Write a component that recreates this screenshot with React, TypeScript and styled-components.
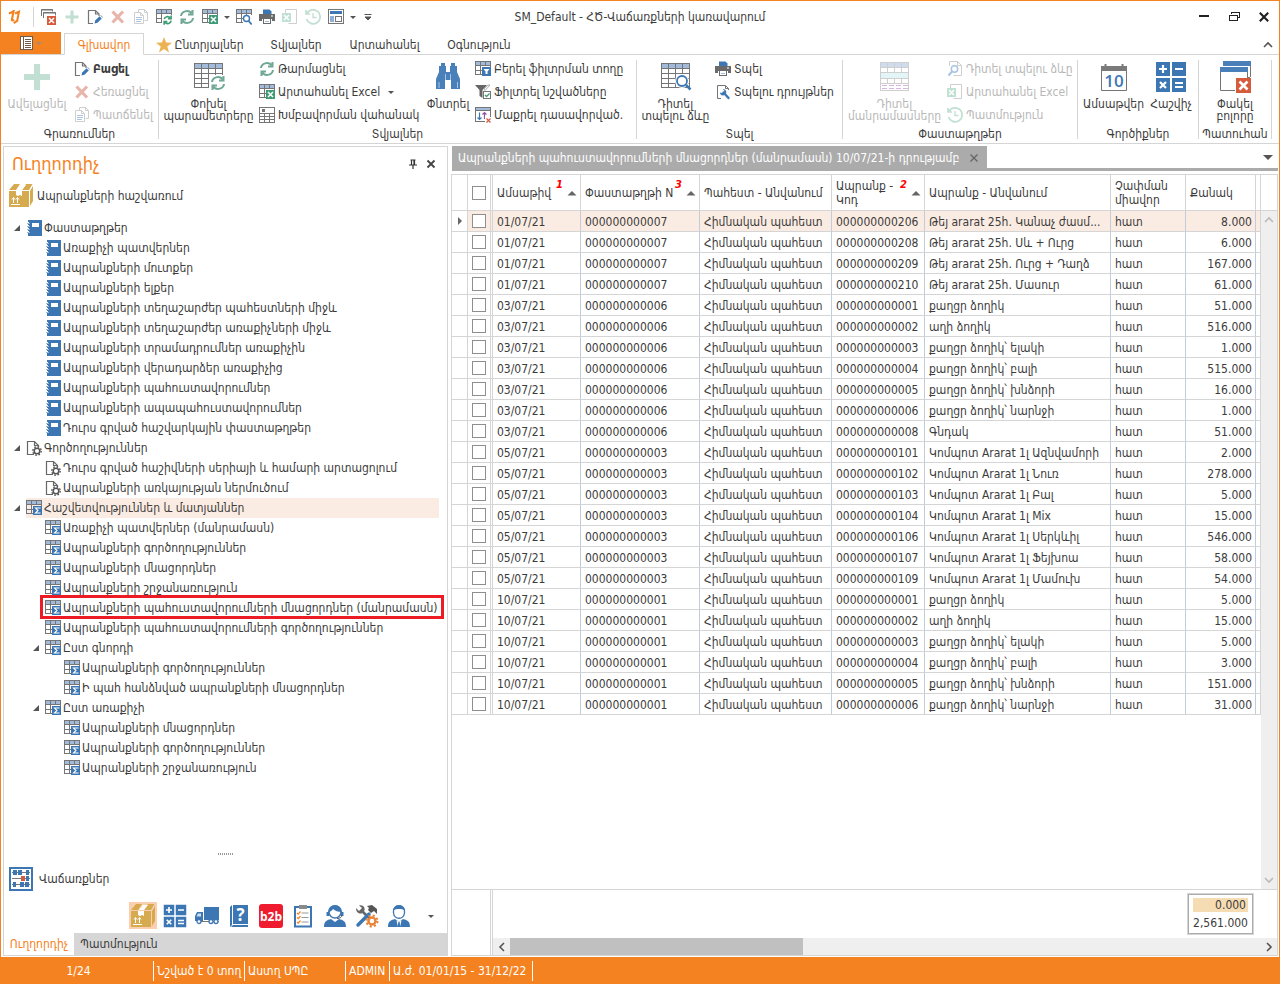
import React from 'react';
import styled, { createGlobalStyle, css } from 'styled-components';

const c = {
  orange: '#f58220',
  text: '#3c3c3c',
  muted: '#b8b8b8',
  line: '#d5d5d5',
  blue: '#3d77b3',
  lightBlue: '#a3bbdb',
  gray: '#757575',
  green: '#6fa895',
  red: '#d65a3c',
  select: '#fbece3',
};

const Global = createGlobalStyle`
  *, *::before, *::after { box-sizing: border-box; }
  body { margin: 0; background: #fff; }
  body, button, input, table {
    font-family: "DejaVu Sans Condensed", "DejaVu Sans", "Noto Sans", sans-serif;
    font-size: 12px;
    line-height: 14px;
    color: ${c.text};
  }
  button { border: 0; padding: 0; background: none; white-space: nowrap; }
  svg { display: block; flex: none; }
`;

/* ---------- icons ---------- */

type IconProps = { s?: number; v?: number; crisp?: boolean; children: React.ReactNode };
const Svg = ({ s = 16, v = 16, crisp, children }: IconProps) => (
  <svg width={s} height={s} viewBox={`0 0 ${v} ${v}`} fill="none" shapeRendering={crisp ? 'crispEdges' : undefined} aria-hidden="true">
    {children}
  </svg>
);

const TableBase = () => (
  <g shapeRendering="crispEdges">
    <rect x="0.5" y="0.5" width="15" height="4" fill={c.lightBlue} stroke={c.gray} />
    <path d="M5.5 0v14M10.5 0v5M.5 4v10M0 9.5h7M0 13.5h7M15.5 4v2" stroke={c.gray} />
  </g>
);
const Arrows = ({ color = c.green }: { color?: string }) => (
  <path d="M2 7a6 5.5 0 0 1 10.500-3M14 9a6 5.500 0 0 1-10.500 3M13.500 1v4.500H9M2.500 15v-4.500H7" stroke={color} strokeWidth="2" />
);
const ExcelBox = ({ x = 7, y = 6, size = 9 }) => (
  <g>
    <rect x={x} y={y} width={size} height={size} fill="#3d9c76" />
    <path d={`M${x + 2} ${y + 2}l${size - 4} ${size - 4}m0-${size - 4}l-${size - 4} ${size - 4}`} stroke="#fff" strokeWidth="1.500" />
  </g>
);
const PageShape = ({ stroke = c.gray }: { stroke?: string }) => (
  <path d="M8 14.500H1.500v-13H8.500L12.500 5.500V7M8.500 1.500v4h4" stroke={stroke} strokeWidth="1.200" />
);
const Cross = ({ color = '#e8b5aa' }: { color?: string }) => (
  <Svg><path d="M2.500 2.500l10.500 11M13 2.500L2.500 13.500" stroke={color} strokeWidth="3.200" /></Svg>
);
const Plus = ({ s = 16 }: { s?: number }) => (
  <Svg s={s} crisp={s > 20}><path d="M8 1.500v13M1.500 8h13" stroke="#c1dfd3" strokeWidth="3.200" /></Svg>
);
const EditPage = () => (
  <Svg>
    <path d="M6 14.500H1.500v-13H8.500L12 5v2M8.500 1.500V5H12" stroke={c.gray} strokeWidth="1.200" />
    <path d="M7.500 14.500l.7-3 4.300-4.300 2.300 2.300-4.300 4.300z" fill={c.blue} />
    <path d="M13.200 6.500l2.300 2.300.500-.600-2.300-2.300z" fill="#6b93c2" />
  </Svg>
);
const CopyPages = () => (
  <Svg>
    <path d="M5.500 3.500v-3h6l3 3v8h-3M11.500.500v3h3" stroke="#cfcfcf" />
    <path d="M1.500 3.500h6l3 3v8h-9zM7.500 3.500v3h3" fill="#fff" stroke="#cfcfcf" />
    <path d="M3 8.500h6M3 10.500h6M3 12.500h5" stroke="#a9c5e3" />
  </Svg>
);
const TableRefresh = () => (
  <Svg><TableBase /><rect x="6" y="6" width="10" height="10" fill="#fff" /><g transform="translate(7 6.500) scale(.58)"><path d="M2 6a6 5.500 0 0 1 10.500-2M14 9a6 5.500 0 0 1-10.500 3M14 0v5.500H8.500M2 16v-5.500H7.500" stroke="#3d9c76" strokeWidth="2.800" /></g></Svg>
);
const Refresh = () => <Svg><Arrows /></Svg>;
const TableExcel = () => <Svg><TableBase /><ExcelBox /></Svg>;
const TableSearch = () => (
  <Svg>
    <TableBase /><path d="M5.500 4v10M10.500 4v3" stroke={c.gray} />
    <circle cx="10.500" cy="9.500" r="3" fill="#fff" stroke={c.blue} strokeWidth="1.400" /><path d="M12.700 12l3 3.500" stroke={c.blue} strokeWidth="1.800" />
  </Svg>
);
const Printer = () => (
  <Svg>
    <path d="M4 5V.500h6.500L12.500 2.500V5z" fill={c.blue} />
    <path d="M0 5h16v7h-3v-2H3v2H0z" fill="#6a6a6a" /><path d="M12 7h2" stroke="#fff" />
    <rect x="4.500" y="9.500" width="7" height="5" fill="#fff" stroke="#6a6a6a" /><path d="M6 12.500h4" stroke={c.lightBlue} />
  </Svg>
);
const PageExcelFaded = () => (
  <Svg>
    <path d="M3.500 4v-3.500h11v14h-8" stroke="#cfcfcf" />
    <rect x="0" y="4" width="9" height="9" fill="#bfe0d2" /><path d="M2 6l5 5m0-5l-5 5" stroke="#fff" strokeWidth="1.500" />
  </Svg>
);
const HistoryFaded = () => (
  <Svg>
    <path d="M2 4.500A7 7 0 1 1 1.500 10M1 1v4h4" stroke="#c1dfd3" strokeWidth="1.700" /><path d="M8 4v4.500h3.500" stroke="#c1dfd3" strokeWidth="1.300" />
  </Svg>
);
const LayoutIcon = () => (
  <Svg crisp>
    <rect x="0.500" y="0.500" width="15" height="14" stroke={c.gray} /><path d="M2 3.500h12" stroke={c.blue} strokeWidth="3" />
    <rect x="2" y="7" width="4" height="6" fill="#8db0da" /><rect x="7.500" y="7.500" width="6" height="5" stroke={c.gray} />
  </Svg>
);
const CloseWindows = () => (
  <Svg>
    <path d="M.5 7V.500h11v2M2.500 9V3.500h12v3" stroke={c.gray} /><path d="M0 1h12M2 4h13" stroke={c.gray} />
    <rect x="6" y="7" width="9" height="9" fill={c.red} /><path d="M8 9l5 5m0-5l-5 5" stroke="#fff" strokeWidth="1.500" />
  </Svg>
);
const CaretDown = ({ color = '#555' }: { color?: string }) => (
  <Svg s={8} v={8}><path d="M1 3h6L4 6z" fill={color} /></Svg>
);
const MoreCaret = () => (
  <Svg s={8} v={8}><path d="M.5 1.500h7M1 4h6L4 7z" fill="#555" stroke="#555" strokeWidth="1" /></Svg>
);
const Logo = () => (
  <Svg s={14}>
    <path d="M1 3.500C4 4 5 2.500 6.500 1L4.500 10.500c-.400 2 1 2 2.500.500" stroke={c.orange} strokeWidth="2.400" />
    <path d="M8 4l4.500-2-2 10.500-4 2.500" stroke={c.orange} strokeWidth="2.400" />
  </Svg>
);
const MenuDoc = () => (
  <Svg s={14} v={14} crisp>
    <rect x="0.500" y="0.500" width="12" height="13" fill="#fff" stroke="#6f5a4a" /><path d="M3.500 0v14M5 3.500h6M5 5.500h6M5 7.500h6M5 9.500h6M5 11.500h6" stroke="#6f5a4a" />
  </Svg>
);
const Star = () => (
  <Svg><path d="M8 0l2.100 5.600 5.900.200-4.700 3.700L13 15.500 8 12l-5 3.500 1.700-6L0 5.800l5.900-.200z" fill="#ecb355" /></Svg>
);
const BigTable = ({ children }: { children: React.ReactNode }) => (
  <Svg s={32} v={32}>
    <g shapeRendering="crispEdges">
      <rect x="1.500" y="2.500" width="28" height="24" stroke={c.gray} />
      <rect x="2" y="3" width="27" height="4" fill={c.lightBlue} />
      <path d="M1 7.500h29M1 12.500h29M1 17.500h29M1 22.500h29M8.500 2v25M15.500 2v25M22.500 2v25" stroke={c.gray} />
    </g>
    {children}
  </Svg>
);
const BigRefresh = () => (
  <BigTable><rect x="16" y="14" width="16" height="16" fill="#fff" /><g transform="translate(17 14)"><Arrows /></g></BigTable>
);
const BigSearch = () => (
  <BigTable><circle cx="22" cy="20" r="7" fill="#fff" /><circle cx="22" cy="20" r="5" fill="#fff" stroke={c.blue} strokeWidth="1.800" /><path d="M26 24l4.500 4.500" stroke={c.blue} strokeWidth="2.500" /></BigTable>
);
const Grouping = () => (
  <Svg crisp>
    <rect x="0.500" y="0.500" width="15" height="15" stroke={c.gray} /><path d="M3 3.500h3" stroke={c.gray} strokeWidth="3" />
    <path d="M0 6.500h16M0 9.500h16M0 12.500h16M5.500 7v9M10.500 7v9" stroke={c.gray} />
  </Svg>
);
const Binoculars = () => (
  <Svg s={32} v={32}>
    <path d="M9 2h4v5h-4zM19 2h4v5h-4zM7 5h7v6h4V5h7v6l3 7v10h-9v-9h-6v9H4V18l3-7z" fill="#4a80ba" />
    <path d="M13.500 13v6M18.500 13v6M7 21v6M25.500 21v6" stroke="#a9c5e3" />
  </Svg>
);
const FilterRow = () => (
  <Svg><TableBase /><rect x="7" y="6" width="9" height="9" fill={c.blue} /><path d="M8.500 8h6l-2 2.500V13h-2v-2.500z" fill="#fff" /></Svg>
);
const FilterMarked = () => (
  <Svg>
    <path d="M0 1h12L7.500 6v8L4.500 12V6z" fill="#666" /><path d="M9 5l4-4h2l-5 5.500z" stroke="#999" strokeWidth=".8" />
    <rect x="8.500" y="7.500" width="7" height="7" fill="#fff" stroke={c.gray} /><path d="M10 11l1.500 1.500 3-3" stroke="#3d9c76" strokeWidth="1.300" />
  </Svg>
);
const ClearSort = () => (
  <Svg>
    <g shapeRendering="crispEdges"><rect x="0.500" y="0.500" width="15" height="14" stroke={c.gray} /><rect x="1" y="1" width="14" height="2" fill={c.lightBlue} /><path d="M0 3.500h16" stroke={c.gray} /></g>
    <path d="M4.500 5.500v7M2.500 10.500l2 2 2-2" stroke={c.blue} strokeWidth="1.200" /><path d="M9.500 12V6M7.500 7.500l2-2 2 2" stroke="#8c57a0" strokeWidth="1.200" />
    <rect x="10" y="10" width="6" height="6" fill="#fff" /><path d="M11.500 11.500l4 4m0-4l-4 4" stroke={c.red} strokeWidth="1.200" />
  </Svg>
);
const PrintSetup = () => (
  <Svg>
    <path d="M13.500 6V4.500l-3-3h-8v13H6M10.500 1.500v3h3" stroke={c.gray} />
    <path d="M8.500 8.500l5 5.500" stroke={c.blue} strokeWidth="2.400" strokeLinecap="round" />
    <path d="M5 8.500c0 2.500 2.500 3.500 4.500 2.500l1.500-1.500c1-2-.500-4.500-3-4.500l1.500 2-1 1.500-1.500.500z" fill={c.blue} />
  </Svg>
);
const PagePreviewFaded = () => (
  <Svg><path d="M2.500 5V.500h8l4 4v10h-8M10.500.500v4h4" stroke="#cfcfcf" /><circle cx="7.500" cy="8" r="3.200" stroke="#aac4e2" strokeWidth="1.500" /><path d="M5 10.500L1.500 14.500" stroke="#aac4e2" strokeWidth="2" /></Svg>
);
const DetailTable = () => (
  <Svg s={32} v={32} crisp>
    <rect x="1.500" y="1.500" width="28" height="28" stroke="#cfcfcf" /><rect x="2" y="2" width="27" height="4" fill="#cfdcee" />
    <path d="M1 6.500h29M1 11.500h29M1 17.500h29M1 22.500h29M8.500 2v21M15.500 2v21M22.500 2v21" stroke="#cfcfcf" />
    <rect x="2" y="12" width="27" height="5" fill="#e4f5f8" /><path d="M3 24.500h26M3 27.500h26" stroke="#d5b6e0" strokeDasharray="5 2" />
  </Svg>
);
const Calendar = () => (
  <Svg s={32} v={32}>
    <path d="M3.500 6.500h25v23h-25z" fill="#fff" stroke={c.gray} /><path d="M3 5h26v5H3z" fill="#7a7a7a" /><path d="M7.500 3v3M24.500 3v3" stroke="#7a7a7a" strokeWidth="2" />
    <text x="16" y="26" textAnchor="middle" fontSize="17" fontWeight="600" fontFamily="Open Sans, sans-serif" fill={c.blue}>10</text>
  </Svg>
);
const Calculator = ({ s = 32 }: { s?: number }) => (
  <Svg s={s} v={32}>
    <path d="M1 1h14v14H1zM17 1h14v14H17zM1 17h14v14H1zM17 17h14v14H17z" fill={c.blue} />
    <path d="M4 8h8M8 4v8M20 8h8M5 21l6 6M11 21l-6 6M20 22h8M20 26h8" stroke="#fff" strokeWidth="2.200" />
  </Svg>
);
const CloseAll = () => (
  <Svg s={32} v={32}>
    <path d="M4 0h28v5H4zM1 6h28v5H1z" fill="#4a80ba" /><path d="M31.500 5v11M1.500 11v18.500H16M28.500 11v6M31 16.500h-3" stroke={c.gray} />
    <path d="M17 17h15v15H17z" fill={c.red} /><path d="M20.500 20.500l8 8m0-8l-8 8" stroke="#fff" strokeWidth="2.600" />
  </Svg>
);
const Book = () => (
  <Svg crisp>
    <rect x="2" y="0" width="14" height="16" fill={c.blue} /><rect x="6" y="3" width="7" height="4" fill="#fff" />
    <path d="M1 3.500h3M1 6.500h3M1 9.500h3M1 12.500h3" stroke="#9db7d6" /><path d="M2 2.500h1M2 5.500h1M2 8.500h1M2 11.500h1" stroke="#fff" />
  </Svg>
);
const GearPage = () => (
  <Svg>
    <PageShape stroke="#666" /><circle cx="11" cy="11" r="2.800" fill="#fff" stroke="#555" strokeWidth="1.500" />
    <circle cx="11" cy="11" r="4.200" stroke="#555" strokeWidth="1.400" strokeDasharray="1.650 1.650" />
  </Svg>
);
const Report = () => (
  <Svg><TableBase /><rect x="7" y="6" width="9" height="9" fill={c.blue} /><path d="M14 8.500V8H9.500l2.500 2.500L9.500 13H14v-.500" stroke="#fff" strokeWidth="1.100" /></Svg>
);
const BoxIcon = () => (
  <Svg s={24} v={24}>
    <path d="M0 7h20v16H0zM0 6L5 0h6L7 6zM13 6l4-6h6.500L20 6zM21 7l3-5v15l-3 5z" fill="#d6aa4f" />
    <path d="M7 7h6v5l-2-1-2 1-2-1zM8 6l4-5h5l-4 5z" fill="#fff" /><path d="M2 20.500h9M4.500 19v-5M8.500 19v-5M3 15.500l1.500-2 1.500 2M7 15.500l1.500-2 1.500 2" stroke="#fff" />
  </Svg>
);
const Abacus = () => (
  <Svg s={24} v={24} crisp>
    <rect x="1" y="1" width="22" height="22" stroke={c.blue} strokeWidth="2" />
    <path d="M3 5.500h18M3 11.500h18M3 17.500h18" stroke="#777" />
    <path d="M4 3h4v5H4zM9 3h4v5H9zM17 3h3v5h-3zM17 9h3v5h-3zM4 15h3v5H4zM11 15h4v5h-4zM16 15h4v5h-4z" fill={c.blue} />
    <path d="M12 9h4v5h-4z" fill={c.red} />
  </Svg>
);
const Truck = () => (
  <Svg s={24} v={24}>
    <path d="M9 3h15v13H9zM2 8h6v9H0v-5z" fill={c.blue} /><path d="M3 9.500h3v3H1.500z" fill="#cfe0f2" /><path d="M6 17.500h18" stroke="#777" />
    <circle cx="4" cy="17.500" r="2" fill="#fff" stroke={c.blue} strokeWidth="1.300" /><circle cx="16" cy="17.500" r="2" fill="#fff" stroke={c.blue} strokeWidth="1.300" /><circle cx="21" cy="17.500" r="2" fill="#fff" stroke={c.blue} strokeWidth="1.300" />
  </Svg>
);
const HelpBook = () => (
  <Svg s={24} v={24}>
    <path d="M3 3l2-2v20l-2 2zM6 1h15v19H6zM4 23l2-2h15v2z" fill={c.blue} />
    <text x="13.500" y="17" textAnchor="middle" fontSize="17" fontWeight="700" fontFamily="Open Sans, sans-serif" fill="#fff">?</text>
  </Svg>
);
const B2b = () => (
  <Svg s={24} v={24}>
    <rect width="24" height="24" rx="3" fill="#ee1c2e" /><text x="12" y="16.500" textAnchor="middle" fontSize="12" fontWeight="700" fontFamily="Open Sans, sans-serif" fill="#fff">b2b</text>
  </Svg>
);
const Checklist = () => (
  <Svg s={24} v={24}>
    <path d="M4 3h16v19.500H4z" fill="#fff" stroke={c.blue} strokeWidth="2" /><path d="M8 1h8v4H8z" fill="#8a8a8a" />
    <path d="M10.500 9h7M10.500 13.500h7M10.500 18h7" stroke="#999" /><path d="M6 9l1.200 1.200L9.500 7.500M6 13.500l1.200 1.200L9.500 12M6 18l1.200 1.200 2.300-2.700" stroke={c.orange} strokeWidth="1.200" />
  </Svg>
);
const Support = () => (
  <Svg s={24} v={24}>
    <circle cx="12" cy="8" r="6" fill="#fff" stroke={c.blue} strokeWidth="1.500" /><path d="M5 8a7 7 0 0 1 14 0c-4 0-7-1-9-3-1 2-3 3-5 3z" fill={c.blue} />
    <path d="M3.500 8v4H6V8zM18 8v4h2.500V8z" fill={c.blue} /><path d="M19 11c0 2-2 3.500-5 3.500" stroke="#555" />
    <path d="M1 23c0-6 3-7 7-8l4 3 4-3c4 1 7 2 7 8z" fill={c.blue} />
  </Svg>
);
const Tools = () => (
  <Svg s={24} v={24}>
    <path d="M8 8l7 7" stroke="#666" strokeWidth="2.500" /><path d="M1 4l3 3 3-3-3-2.500C8 0 11 4 9 7.500 7 11 1 10 1 4z" fill="#666" /><path d="M12 2l5-1 5 4v5l-3-3-3 2-3-3 1-2z" fill="#555" />
    <path d="M14 10L3 21" stroke={c.blue} strokeWidth="3.500" strokeLinecap="round" />
    <circle cx="17" cy="17" r="3.500" fill="#fff" stroke="#e8843a" strokeWidth="2.500" /><circle cx="17" cy="17" r="5.500" stroke="#e8843a" strokeWidth="2" strokeDasharray="2.160 2.160" />
  </Svg>
);
const Person = () => (
  <Svg s={24} v={24}>
    <path d="M6.500 7c0-7 11-7 11 0v2c-1 7-10 7-11 0z" fill="#fff" stroke={c.blue} strokeWidth="1.300" /><path d="M6 8c0-9 12-9 12 0-1-3-3-3-6-3S7 5 6 8z" fill={c.blue} />
    <path d="M1 23c0-6 3-7 7-8l4 3 4-3c4 1 7 2 7 8z" fill={c.blue} /><path d="M9.500 16.500L12 18l2.500-1.500L13 23h-2z" fill="#fff" /><path d="M11.300 18h1.400l.6 5h-2.600z" fill={c.blue} />
  </Svg>
);
const SortUp = () => <Svg s={10} v={10}><path d="M.5 7.500h9L5 3z" fill="#666" /></Svg>;
const Chevron = ({ d, color = '#888' }: { d: string; color?: string }) => <Svg s={10} v={10}><path d={d} stroke={color} strokeWidth="1.600" /></Svg>;
const Xmark = ({ s = 10, w = 1.8, color = '#444' }) => <Svg s={s} v={10}><path d="M1.500 1.500l7 7m0-7l-7 7" stroke={color} strokeWidth={w} /></Svg>;
const Pin = () => <Svg s={10} v={10}><path d="M2.500 1h5M3.500 1v5M6.500 1v5M1 6h8M5 6v4M6 1v5" stroke="#333" strokeWidth="1.200" /></Svg>;

/* ---------- shell ---------- */

const Window = styled.div`
  min-height: 100vh;
  display: flex;
  flex-direction: column;
  border: 1px solid ${c.orange};
  border-bottom: 0;
`;
const TitleBar = styled.header`
  display: grid;
  grid-template-columns: 1fr auto 1fr;
  align-items: center;
  height: 31px;
`;
const QuickBar = styled.div`
  display: flex;
  align-items: center;
  height: 31px;
`;
const LogoSlot = styled.div`
  display: flex;
  justify-content: center;
  width: 32px;
  padding-right: 5px;
`;
const QuickDivider = styled.div`
  width: 1px;
  height: 20px;
  margin-right: 3px;
  background: ${c.line};
`;
const QuickButton = styled.button<{ $w?: number }>`
  display: flex;
  align-items: center;
  justify-content: center;
  width: ${p => p.$w ?? 23}px;
  height: 24px;
`;
const Title = styled.h1`
  margin: 0;
  font-size: 12px;
  font-weight: 400;
`;
const WindowButtons = styled.div`
  display: flex;
  justify-content: flex-end;
`;
const WindowButton = styled.button`
  display: flex;
  align-items: center;
  justify-content: center;
  width: 30px;
  height: 24px;
`;

const TabBar = styled.nav`
  display: flex;
  align-items: flex-end;
  height: 23px;
  border-bottom: 1px solid ${c.line};
`;
const AppButton = styled.button`
  display: flex;
  align-items: center;
  justify-content: center;
  gap: 1px;
  width: 60px;
  height: 22px;
  margin-right: 3px;
  background: ${c.orange};
`;
const RibbonTab = styled.button<{ $w: number; $active?: boolean }>`
  display: flex;
  align-items: center;
  justify-content: center;
  gap: 2px;
  width: ${p => p.$w}px;
  height: 21px;
  padding-top: 2px;
  border: 1px solid transparent;
  ${p => p.$active && css`
    margin-bottom: -1px;
    height: 22px;
    border-color: ${c.line};
    border-bottom-color: #fff;
    background: #fff;
    color: ${c.orange};
  `}
`;
const Collapse = styled.button`
  margin: 0 6px 4px auto;
`;

const Ribbon = styled.div`
  display: flex;
  height: 89px;
  border-bottom: 1px solid ${c.line};
`;
const Group = styled.section<{ $w: number }>`
  flex: none;
  width: ${p => p.$w}px;
  margin: 5px 0 4px;
  display: flex;
  flex-direction: column;
  border-right: 1px solid ${c.line};
`;
const GroupBody = styled.div`
  display: flex;
  flex: 1;
`;
const GroupTitle = styled.h2`
  margin: 0;
  font-size: 12px;
  line-height: 9px;
  font-weight: 400;
  text-align: center;
`;
const BigButton = styled.button<{ $w: number; $off?: boolean }>`
  width: ${p => p.$w}px;
  display: flex;
  flex-direction: column;
  align-items: center;
  gap: 4px;
  line-height: 12px;
  color: ${p => (p.$off ? c.muted : c.text)};
`;
const BigIcon = styled.span`
  display: flex;
  align-items: center;
  height: 34px;
`;
const SmallColumn = styled.div<{ $w?: number }>`
  display: flex;
  flex-direction: column;
  width: ${p => (p.$w ? `${p.$w}px` : 'auto')};
  padding-left: 1px;
`;
const SmallButton = styled.button<{ $off?: boolean; $bold?: boolean }>`
  display: flex;
  align-items: center;
  gap: 3px;
  height: 23px;
  padding-bottom: 5px;
  color: ${p => (p.$off ? c.muted : c.text)};
  font-weight: ${p => (p.$bold ? 700 : 400)};
`;

/* ---------- navigator ---------- */

const Main = styled.main`
  flex: 1;
  display: flex;
  gap: 3px;
  padding: 2px 1px 1px 2px;
`;
const Sidebar = styled.aside`
  flex: none;
  width: 445px;
  display: flex;
  flex-direction: column;
  border: 1px solid ${c.line};
`;
const SideHead = styled.div`
  display: flex;
  align-items: center;
  gap: 8px;
  height: 33px;
  padding: 0 11px 0 8px;
`;
const SideTitle = styled.h2`
  flex: 1;
  margin: 0;
  font-size: 18px;
  line-height: 24px;
  font-weight: 400;
  color: ${c.orange};
`;
const ModuleRow = styled.button<{ $gap?: number }>`
  display: flex;
  align-items: center;
  gap: ${p => p.$gap ?? 4}px;
  height: 32px;
  padding-left: 5px;
`;
const Tree = styled.ul`
  flex: 1;
  margin: 0;
  padding: 6px 8px 0 6px;
  list-style: none;
`;
const TreeRow = styled.li<{ $level: number }>`
  display: flex;
  height: 20px;
  padding-left: ${p => p.$level * 19}px;
`;
const CaretSlot = styled.button`
  flex: none;
  display: flex;
  align-items: center;
  justify-content: center;
  width: 16px;
  padding-right: 2px;
`;
const TreeItem = styled.button<{ $selected?: boolean; $marked?: boolean }>`
  position: relative;
  flex: 1;
  display: flex;
  align-items: center;
  gap: 2px;
  min-width: 0;
  background: ${p => (p.$selected ? c.select : 'none')};
  ${p => p.$marked && css`
    &::after {
      content: '';
      position: absolute;
      inset: -3px -5px -1px;
      border: 3px solid #ed1c24;
    }
  `}
`;
const Splitter = styled.div`
  align-self: center;
  width: 15px;
  height: 2px;
  margin-bottom: 8px;
  background: repeating-linear-gradient(to right, #999 0 1px, transparent 1px 2px);
`;
const ModuleStrip = styled.div`
  display: flex;
  justify-content: flex-end;
  margin-top: 7px;
  padding-bottom: 4px;
`;
const ModuleButton = styled.button<{ $active?: boolean }>`
  display: flex;
  align-items: center;
  justify-content: center;
  width: 28px;
  height: 27px;
  margin: 0 2px;
  background: ${p => (p.$active ? '#facfb0' : 'none')};
`;
const SideTabs = styled.div`
  display: flex;
  height: 22px;
  background: #d6d6d6;
`;
const SideTab = styled.button<{ $active?: boolean }>`
  width: ${p => (p.$active ? 70 : 90)}px;
  background: ${p => (p.$active ? '#fff' : 'none')};
  color: ${p => (p.$active ? c.orange : c.text)};
`;

/* ---------- document ---------- */

const Doc = styled.section`
  flex: 1;
  min-width: 0;
  display: flex;
  flex-direction: column;
`;
const DocTabs = styled.div`
  display: flex;
  justify-content: space-between;
  align-items: center;
  height: 25px;
  margin: 0 0 3px 1px;
  padding-right: 5px;
  border-bottom: 3px solid #ababab;
`;
const DocTab = styled.div`
  display: flex;
  align-items: center;
  justify-content: space-between;
  width: 535px;
  height: 22px;
  padding: 2px 8px 0 6px;
  background: #ababab;
  color: #fff;
  white-space: nowrap;
`;
const Grid = styled.div`
  flex: 1;
  display: flex;
  flex-direction: column;
  border: 1px solid ${c.line};
`;
const GridBody = styled.div`
  flex: 1;
  display: flex;
`;
const TableArea = styled.div`
  flex: 1;
  min-width: 0;
`;
const Table = styled.table`
  width: 100%;
  table-layout: fixed;
  border-collapse: separate;
  border-spacing: 0;
`;
const Th = styled.th<{ $bare?: boolean }>`
  position: relative;
  height: 36px;
  padding: ${p => (p.$bare ? 0 : '0 4px')};
  border-right: 1px solid ${c.line};
  border-bottom: 1px solid ${c.line};
  font-weight: 400;
  text-align: left;
`;
const SortMark = styled.span`
  position: absolute;
  right: 3px;
  top: 13px;
`;
const SortIndex = styled.sup`
  position: absolute;
  right: 17px;
  top: 4px;
  color: #f00;
  font-family: "DejaVu Sans", sans-serif;
  font-size: 10px;
  line-height: 12px;
  font-weight: 700;
  font-style: italic;
`;
const Row = styled.tr<{ $selected?: boolean }>`
  background: ${p => (p.$selected ? c.select : '#fff')};
`;
const Td = styled.td<{ $right?: boolean }>`
  height: 21px;
  padding: 2px 3px 0 4px;
  border-right: 1px solid #c3ccdb;
  border-bottom: 1px solid ${c.line};
  overflow: hidden;
  text-overflow: ellipsis;
  white-space: nowrap;
  text-align: ${p => (p.$right ? 'right' : 'left')};
`;
const BareTd = styled.td<{ $white?: boolean }>`
  height: 21px;
  padding: 0;
  border-right: 1px solid ${c.line};
  border-bottom: 1px solid ${c.line};
  ${p => p.$white && css`background: #fff;`}
`;
const Check = styled.input`
  appearance: none;
  display: block;
  width: 14px;
  height: 14px;
  margin: 0 0 0 4px;
  border: 1px solid #8e8e8e;
  background: #fff;
`;
const RowPointer = styled.div`
  width: 0;
  margin-left: 6px;
  border: 4px solid transparent;
  border-left-color: #666;
  border-right: 0;
`;
const VScroll = styled.div`
  width: 16px;
  display: flex;
  flex-direction: column;
`;
const VHead = styled.div`
  height: 36px;
  border-bottom: 1px solid ${c.line};
`;
const VTrack = styled.div`
  flex: 1;
  display: flex;
  flex-direction: column;
  justify-content: space-between;
  align-items: center;
  padding: 4px 0;
  background: #efefef;
`;
const Footer = styled.div`
  display: flex;
  border-top: 1px solid ${c.line};
  height: 66px;
`;
const FooterFixed = styled.div`
  width: 41px;
  padding-right: 1px;
  border-right: 1px solid ${c.line};
`;
const FooterCell = styled.div`
  height: 100%;
  border-right: 1px solid ${c.line};
`;
const FooterMain = styled.div`
  flex: 1;
  display: flex;
  flex-direction: column;
`;
const Totals = styled.div`
  align-self: flex-end;
  width: 67px;
  height: 42px;
  margin: 3px 23px 3px 0;
  padding: 4px 5px;
  border: 1px solid ${c.line};
  box-shadow: inset 0 0 0 1px #ababab;
  text-align: right;
`;
const Total = styled.div<{ $hot?: boolean }>`
  height: 14px;
  margin-bottom: 4px;
  padding-right: ${p => (p.$hot ? 2 : 0)}px;
  background: ${p => (p.$hot ? '#f6dcb3' : 'none')};
`;
const HScroll = styled.div`
  flex: 1;
  display: flex;
  align-items: center;
  gap: 3px;
  padding: 0 3px 0 4px;
  background: #efefef;
`;
const HTrack = styled.div`
  flex: 1;
  height: 17px;
`;
const HThumb = styled.div`
  width: 39%;
  height: 100%;
  background: #c0c0c0;
`;

const StatusBar = styled.footer`
  display: flex;
  align-items: center;
  height: 27px;
  background: ${c.orange};
  color: #fff;
`;
const Status = styled.div<{ $w: number; $center?: boolean }>`
  width: ${p => p.$w}px;
  height: 20px;
  padding: 3px 0 0 3px;
  border-right: 1px solid #fff;
  text-align: ${p => (p.$center ? 'center' : 'left')};
  white-space: nowrap;
`;

/* ---------- data ---------- */

type Kind = 'book' | 'gear' | 'report';
type Node = { l: number; k: Kind; t: string; open?: boolean; selected?: boolean; marked?: boolean };
const tree: Node[] = [
  { l: 0, k: 'book', t: 'Փաստաթղթեր', open: true },
  { l: 1, k: 'book', t: 'Առաքիչի պատվերներ' },
  { l: 1, k: 'book', t: 'Ապրանքների մուտքեր' },
  { l: 1, k: 'book', t: 'Ապրանքների ելքեր' },
  { l: 1, k: 'book', t: 'Ապրանքների տեղաշարժեր պահեստների միջև' },
  { l: 1, k: 'book', t: 'Ապրանքների տեղաշարժեր առաքիչների միջև' },
  { l: 1, k: 'book', t: 'Ապրանքների տրամադրումներ առաքիչին' },
  { l: 1, k: 'book', t: 'Ապրանքների վերադարձեր առաքիչից' },
  { l: 1, k: 'book', t: 'Ապրանքների պահուստավորումներ' },
  { l: 1, k: 'book', t: 'Ապրանքների ապապահուստավորումներ' },
  { l: 1, k: 'book', t: 'Դուրս գրված հաշվարկային փաստաթղթեր' },
  { l: 0, k: 'gear', t: 'Գործողություններ', open: true },
  { l: 1, k: 'gear', t: 'Դուրս գրված հաշիվների սերիայի և համարի արտացոլում' },
  { l: 1, k: 'gear', t: 'Ապրանքների առկայության ներմուծում' },
  { l: 0, k: 'report', t: 'Հաշվետվություններ և մատյաններ', open: true, selected: true },
  { l: 1, k: 'report', t: 'Առաքիչի պատվերներ (մանրամասն)' },
  { l: 1, k: 'report', t: 'Ապրանքների գործողություններ' },
  { l: 1, k: 'report', t: 'Ապրանքների մնացորդներ' },
  { l: 1, k: 'report', t: 'Ապրանքների շրջանառություն' },
  { l: 1, k: 'report', t: 'Ապրանքների պահուստավորումների մնացորդներ (մանրամասն)', marked: true },
  { l: 1, k: 'report', t: 'Ապրանքների պահուստավորումների գործողություններ' },
  { l: 1, k: 'report', t: 'Ըստ գնորդի', open: true },
  { l: 2, k: 'report', t: 'Ապրանքների գործողություններ' },
  { l: 2, k: 'report', t: 'Ի պահ հանձնված ապրանքների մնացորդներ' },
  { l: 1, k: 'report', t: 'Ըստ առաքիչի', open: true },
  { l: 2, k: 'report', t: 'Ապրանքների մնացորդներ' },
  { l: 2, k: 'report', t: 'Ապրանքների գործողություններ' },
  { l: 2, k: 'report', t: 'Ապրանքների շրջանառություն' },
];
const kindIcon = { book: <Book />, gear: <GearPage />, report: <Report /> };

type Line = [string, string, string, string, string];
const lines: Line[] = [
  ['01/07/21', '7', '206', 'Թեյ ararat 25հ. Կանաչ ժասմ...', '8.000'],
  ['01/07/21', '7', '208', 'Թեյ ararat 25հ. Սև + Ուրց', '6.000'],
  ['01/07/21', '7', '209', 'Թեյ ararat 25հ. Ուրց + Դաղձ', '167.000'],
  ['01/07/21', '7', '210', 'Թեյ ararat 25հ. Մասուր', '61.000'],
  ['03/07/21', '6', '001', 'քաղցր ձողիկ', '51.000'],
  ['03/07/21', '6', '002', 'աղի ձողիկ', '516.000'],
  ['03/07/21', '6', '003', 'քաղցր ձողիկ՝ ելակի', '1.000'],
  ['03/07/21', '6', '004', 'քաղցր ձողիկ՝ բալի', '515.000'],
  ['03/07/21', '6', '005', 'քաղցր ձողիկ՝ խնձորի', '16.000'],
  ['03/07/21', '6', '006', 'քաղցր ձողիկ՝ նարնջի', '1.000'],
  ['03/07/21', '6', '008', 'Գնդակ', '51.000'],
  ['05/07/21', '3', '101', 'Կոմպոտ Ararat 1լ Ազնվամորի', '2.000'],
  ['05/07/21', '3', '102', 'Կոմպոտ Ararat 1լ Նուռ', '278.000'],
  ['05/07/21', '3', '103', 'Կոմպոտ Ararat 1լ Բալ', '5.000'],
  ['05/07/21', '3', '104', 'Կոմպոտ Ararat 1լ Mix', '15.000'],
  ['05/07/21', '3', '106', 'Կոմպոտ Ararat 1լ Սերկևիլ', '546.000'],
  ['05/07/21', '3', '107', 'Կոմպոտ Ararat 1լ Ֆեյխոա', '58.000'],
  ['05/07/21', '3', '109', 'Կոմպոտ Ararat 1լ Մամուխ', '54.000'],
  ['10/07/21', '1', '001', 'քաղցր ձողիկ', '5.000'],
  ['10/07/21', '1', '002', 'աղի ձողիկ', '15.000'],
  ['10/07/21', '1', '003', 'քաղցր ձողիկ՝ ելակի', '5.000'],
  ['10/07/21', '1', '004', 'քաղցր ձողիկ՝ բալի', '3.000'],
  ['10/07/21', '1', '005', 'քաղցր ձողիկ՝ խնձորի', '151.000'],
  ['10/07/21', '1', '006', 'քաղցր ձողիկ՝ նարնջի', '31.000'],
];

const modules: [string, React.ReactNode][] = [
  ['Ապրանքների հաշվառում', <BoxIcon />],
  ['Հաշվիչ', <Calculator s={24} />],
  ['Առաքում', <Truck />],
  ['Օգնություն', <HelpBook />],
  ['b2b', <B2b />],
  ['Ցուցակ', <Checklist />],
  ['Սպասարկում', <Support />],
  ['Կարգավորումներ', <Tools />],
  ['Ադմինիստրատոր', <Person />],
];

export default function App() {
  return (
    <Window>
      <Global />
      <TitleBar>
        <QuickBar>
          <LogoSlot><Logo /></LogoSlot>
          <QuickDivider />
          <QuickButton><CloseWindows /></QuickButton>
          <QuickButton><Plus /></QuickButton>
          <QuickButton><EditPage /></QuickButton>
          <QuickButton><Cross /></QuickButton>
          <QuickButton><CopyPages /></QuickButton>
          <QuickButton><TableRefresh /></QuickButton>
          <QuickButton><Refresh /></QuickButton>
          <QuickButton><TableExcel /></QuickButton>
          <QuickButton $w={11}><CaretDown /></QuickButton>
          <QuickButton><TableSearch /></QuickButton>
          <QuickButton><Printer /></QuickButton>
          <QuickButton><PageExcelFaded /></QuickButton>
          <QuickButton><HistoryFaded /></QuickButton>
          <QuickButton><LayoutIcon /></QuickButton>
          <QuickButton $w={11}><CaretDown /></QuickButton>
          <QuickButton $w={19}><MoreCaret /></QuickButton>
        </QuickBar>
        <Title>SM_Default - ՀԾ-Վաճառքների կառավարում</Title>
        <WindowButtons>
          <WindowButton aria-label="Minimize"><Svg s={12} v={12} crisp><path d="M1 5h10" stroke="#222" strokeWidth="2" /></Svg></WindowButton>
          <WindowButton aria-label="Restore"><Svg s={12} v={12} crisp><path d="M3.500 3V1.500h8v5H9M1.500 4.500h8v5h-8zM1 4h9M3 1h9" stroke="#222" /></Svg></WindowButton>
          <WindowButton aria-label="Close"><Xmark s={12} color="#222" /></WindowButton>
        </WindowButtons>
      </TitleBar>

      <TabBar>
        <AppButton aria-label="Menu"><MenuDoc /><CaretDown color="#a98a70" /></AppButton>
        <RibbonTab $w={80} $active>Գլխավոր</RibbonTab>
        <RibbonTab $w={112}><Star />Ընտրյալներ</RibbonTab>
        <RibbonTab $w={80}>Տվյալներ</RibbonTab>
        <RibbonTab $w={97}>Արտահանել</RibbonTab>
        <RibbonTab $w={92}>Օգնություն</RibbonTab>
        <Collapse aria-label="Collapse"><Chevron d="M1 7l4-4 4 4" color="#555" /></Collapse>
      </TabBar>

      <Ribbon>
        <Group $w={158}>
          <GroupBody>
            <BigButton $w={72} $off><BigIcon><Plus s={32} /></BigIcon>Ավելացնել</BigButton>
            <SmallColumn>
              <SmallButton $bold><EditPage />Բացել</SmallButton>
              <SmallButton $off><Cross />Հեռացնել</SmallButton>
              <SmallButton $off><CopyPages />Պատճենել</SmallButton>
            </SmallColumn>
          </GroupBody>
          <GroupTitle>Գրառումներ</GroupTitle>
        </Group>
        <Group $w={478}>
          <GroupBody>
            <BigButton $w={99}><BigIcon><BigRefresh /></BigIcon><span>Փոխել<br />պարամետրերը</span></BigButton>
            <SmallColumn $w={164}>
              <SmallButton><Refresh />Թարմացնել</SmallButton>
              <SmallButton><TableExcel />Արտահանել Excel&nbsp;<CaretDown /></SmallButton>
              <SmallButton><Grouping />Խմբավորման վահանակ</SmallButton>
            </SmallColumn>
            <BigButton $w={52}><BigIcon><Binoculars /></BigIcon>Փնտրել</BigButton>
            <SmallColumn>
              <SmallButton><FilterRow />Բերել ֆիլտրման տողը</SmallButton>
              <SmallButton><FilterMarked />Ֆիլտրել նշվածները</SmallButton>
              <SmallButton><ClearSort />Մաքրել դասավորված.</SmallButton>
            </SmallColumn>
          </GroupBody>
          <GroupTitle>Տվյալներ</GroupTitle>
        </Group>
        <Group $w={206}>
          <GroupBody>
            <BigButton $w={77}><BigIcon><BigSearch /></BigIcon><span>Դիտել<br />տպելու ձևը</span></BigButton>
            <SmallColumn>
              <SmallButton><Printer />Տպել</SmallButton>
              <SmallButton><PrintSetup />Տպելու դրույթներ</SmallButton>
            </SmallColumn>
          </GroupBody>
          <GroupTitle>Տպել</GroupTitle>
        </Group>
        <Group $w={235}>
          <GroupBody>
            <BigButton $w={103} $off><BigIcon><DetailTable /></BigIcon><span>Դիտել<br />մանրամասները</span></BigButton>
            <SmallColumn>
              <SmallButton $off><PagePreviewFaded />Դիտել տպելու ձևը</SmallButton>
              <SmallButton $off><PageExcelFaded />Արտահանել Excel</SmallButton>
              <SmallButton $off><HistoryFaded />Պատմություն</SmallButton>
            </SmallColumn>
          </GroupBody>
          <GroupTitle>Փաստաթղթեր</GroupTitle>
        </Group>
        <Group $w={121}>
          <GroupBody>
            <BigButton $w={71}><BigIcon><Calendar /></BigIcon>Ամսաթվեր</BigButton>
            <BigButton $w={44}><BigIcon><Calculator /></BigIcon>Հաշվիչ</BigButton>
          </GroupBody>
          <GroupTitle>Գործիքներ</GroupTitle>
        </Group>
        <Group $w={73}>
          <GroupBody>
            <BigButton $w={72}><BigIcon><CloseAll /></BigIcon><span>Փակել<br />բոլորը</span></BigButton>
          </GroupBody>
          <GroupTitle>Պատուհան</GroupTitle>
        </Group>
      </Ribbon>

      <Main>
        <Sidebar>
          <SideHead>
            <SideTitle>Ուղղորդիչ</SideTitle>
            <button aria-label="Pin"><Pin /></button>
            <button aria-label="Close"><Xmark /></button>
          </SideHead>
          <ModuleRow><BoxIcon />Ապրանքների հաշվառում</ModuleRow>
          <Tree>
            {tree.map((n, i) => (
              <TreeRow key={i} $level={n.l}>
                <CaretSlot aria-label="Toggle">
                  {n.open && <Svg s={8} v={8}><path d="M7 1v6H1z" fill="#555" /></Svg>}
                </CaretSlot>
                <TreeItem $selected={n.selected} $marked={n.marked}>{kindIcon[n.k]}{n.t}</TreeItem>
              </TreeRow>
            ))}
          </Tree>
          <Splitter />
          <ModuleRow $gap={6}><Abacus />Վաճառքներ</ModuleRow>
          <ModuleStrip>
            {modules.map(([label, icon], i) => (
              <ModuleButton key={label} aria-label={label} $active={i === 0}>{icon}</ModuleButton>
            ))}
            <ModuleButton aria-label="More"><CaretDown /></ModuleButton>
          </ModuleStrip>
          <SideTabs>
            <SideTab $active>Ուղղորդիչ</SideTab>
            <SideTab>Պատմություն</SideTab>
          </SideTabs>
        </Sidebar>

        <Doc>
          <DocTabs>
            <DocTab>
              Ապրանքների պահուստավորումների մնացորդներ (մանրամասն) 10/07/21-ի դրությամբ
              <button aria-label="Close tab"><Xmark w={1.4} color="#666" /></button>
            </DocTab>
            <button aria-label="Tab list"><Svg s={10} v={10}><path d="M0 3h10L5 8z" fill="#555" /></Svg></button>
          </DocTabs>
          <Grid>
            <GridBody>
              <TableArea>
                <Table>
                  <colgroup>
                    <col width={16} /><col width={23} /><col width={2} /><col width={88} /><col width={119} />
                    <col width={132} /><col width={93} /><col /><col width={75} /><col width={70} /><col width={5} />
                  </colgroup>
                  <thead>
                    <tr>
                      <Th $bare />
                      <Th $bare><Check type="checkbox" aria-label="Select all" /></Th>
                      <Th $bare />
                      <Th>Ամսաթիվ<SortIndex>1</SortIndex><SortMark><SortUp /></SortMark></Th>
                      <Th>Փաստաթղթի N<SortIndex>3</SortIndex><SortMark><SortUp /></SortMark></Th>
                      <Th>Պահեստ - Անվանում</Th>
                      <Th>Ապրանք -<br />Կոդ<SortIndex>2</SortIndex><SortMark><SortUp /></SortMark></Th>
                      <Th>Ապրանք - Անվանում</Th>
                      <Th>Չափման<br />միավոր</Th>
                      <Th>Քանակ</Th>
                      <Th $bare />
                    </tr>
                  </thead>
                  <tbody>
                    {lines.map(([date, doc, code, name, qty], i) => (
                      <Row key={i} $selected={i === 0}>
                        <BareTd $white>{i === 0 && <RowPointer />}</BareTd>
                        <BareTd><Check type="checkbox" aria-label={name} /></BareTd>
                        <BareTd />
                        <Td>{date}</Td>
                        <Td>{doc.padStart(12, '0')}</Td>
                        <Td>Հիմնական պահեստ</Td>
                        <Td>{code.padStart(12, '0')}</Td>
                        <Td>{name}</Td>
                        <Td>հատ</Td>
                        <Td $right>{qty}</Td>
                        <BareTd />
                      </Row>
                    ))}
                  </tbody>
                </Table>
              </TableArea>
              <VScroll>
                <VHead />
                <VTrack>
                  <Chevron d="M1 7l4-4 4 4" color="#bbb" />
                  <Chevron d="M1 3l4 4 4-4" color="#bbb" />
                </VTrack>
              </VScroll>
            </GridBody>
            <Footer>
              <FooterFixed><FooterCell /></FooterFixed>
              <FooterMain>
                <Totals>
                  <Total $hot>0.000</Total>
                  <Total>2,561.000</Total>
                </Totals>
                <HScroll>
                  <Chevron d="M7 1L3 5l4 4" color="#555" />
                  <HTrack><HThumb /></HTrack>
                  <Chevron d="M3 1l4 4-4 4" color="#555" />
                </HScroll>
              </FooterMain>
            </Footer>
          </Grid>
        </Doc>
      </Main>

      <StatusBar>
        <Status $w={153} $center>1/24</Status>
        <Status $w={91}>Նշված է 0 տող</Status>
        <Status $w={101}>Աստղ ՍՊԸ</Status>
        <Status $w={44}>ADMIN</Status>
        <Status $w={143}>Ա.ժ. 01/01/15 - 31/12/22</Status>
      </StatusBar>
    </Window>
  );
}
